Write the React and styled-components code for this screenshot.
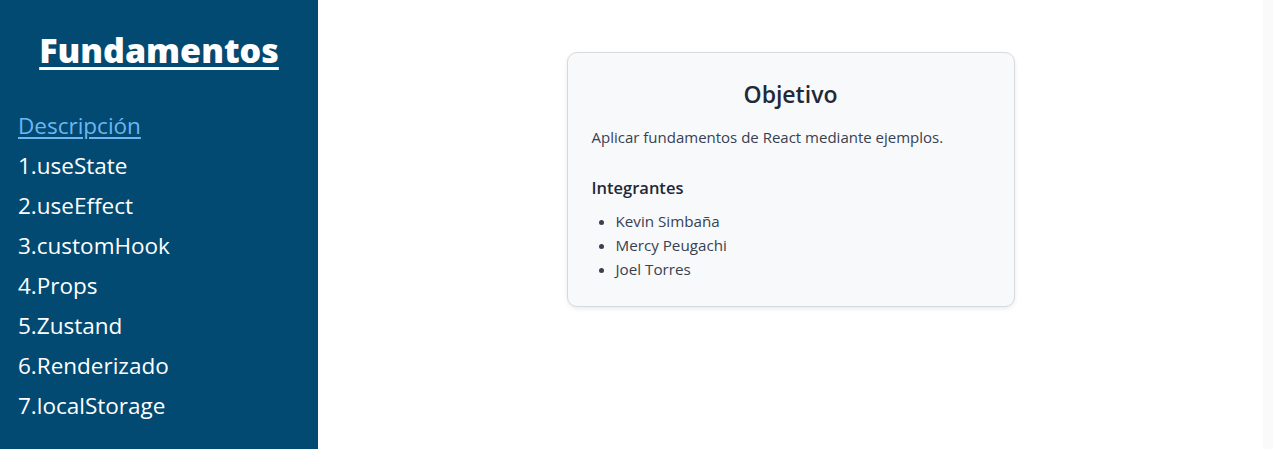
import React from 'react'
import styled, { createGlobalStyle } from 'styled-components';

const GlobalStyle = createGlobalStyle`
  body {
    margin: 0;
    font-family: "Open Sans", "Noto Sans", sans-serif;
    background: #fafafa;
  }
`;

const links = [
  "1.useState",
  "2.useEffect",
  "3.customHook",
  "4.Props",
  "5.Zustand",
  "6.Renderizado",
  "7.localStorage",
];

const integrantes = ["Kevin Simbaña", "Mercy Peugachi", "Joel Torres"];

function App() {
  return (
    <>
      <GlobalStyle />
      <Layout>
        <Sidebar>
          <Brand>Fundamentos</Brand>
          <NavList>
            <NavItem>
              <NavLink href="#" active>Descripción</NavLink>
            </NavItem>
            {links.map((l) => (
              <NavItem key={l}>
                <NavLink href="#">{l}</NavLink>
              </NavItem>
            ))}
          </NavList>
        </Sidebar>
        <Main>
          <Card>
            <Title>Objetivo</Title>
            <Text>Aplicar fundamentos de React mediante ejemplos.</Text>
            <SubTitle>Integrantes</SubTitle>
            <Members>
              {integrantes.map((n) => (
                <li key={n}>{n}</li>
              ))}
            </Members>
          </Card>
        </Main>
      </Layout>
    </>
  )
}

const Layout = styled.div`
  display: flex;
  min-height: 449px;
  padding-right: 10px;
`;

const Sidebar = styled.aside`
  width: 318px;
  flex-shrink: 0;
  background: #034a72;
  color: #fff;
  padding: 28px 18px 0;
  box-sizing: border-box;
`;

const Brand = styled.h1`
  margin: 0;
  text-align: center;
  font-size: 34px;
  font-weight: 800;
  text-decoration: underline;
  text-decoration-thickness: 3px;
  text-underline-offset: 4px;
  line-height: 44px;
`;

const NavList = styled.ul`
  list-style: none;
  margin: 33px 0 0;
  padding: 0;
`;

const NavItem = styled.li`
  height: 40px;
  display: flex;
  align-items: center;
`;

const NavLink = styled.a`
  font-size: 22.5px;
  color: ${(p) => (p.active ? "#6cb6f2" : "#fff")};
  text-decoration: ${(p) => (p.active ? "underline" : "none")};
  text-underline-offset: 3px;
`;

const Main = styled.main`
  flex: 1;
  background: #fff;
  display: flex;
  justify-content: center;
  align-items: flex-start;
  padding-top: 52px;
`;

const Card = styled.section`
  width: 448px;
  box-sizing: border-box;
  background: #f8f9fb;
  border: 1px solid #d6d9de;
  border-radius: 10px;
  box-shadow: 0 2px 4px rgba(0, 0, 0, 0.08);
  padding: 25px 24px 25px;
  color: #374151;
`;

const Title = styled.h2`
  margin: 0;
  text-align: center;
  font-size: 23px;
  font-weight: 600;
  color: #1f2937;
  line-height: 32px;
`;

const Text = styled.p`
  margin: 15px 0 0;
  font-size: 15px;
  line-height: 24px;
`;

const SubTitle = styled.h3`
  margin: 27px 0 0;
  font-size: 16.5px;
  font-weight: 600;
  color: #1f2937;
  line-height: 24px;
`;

const Members = styled.ul`
  margin: 9px 0 0;
  padding-left: 24px;
  font-size: 15.2px;
  line-height: 24px;
`;

export default App;
